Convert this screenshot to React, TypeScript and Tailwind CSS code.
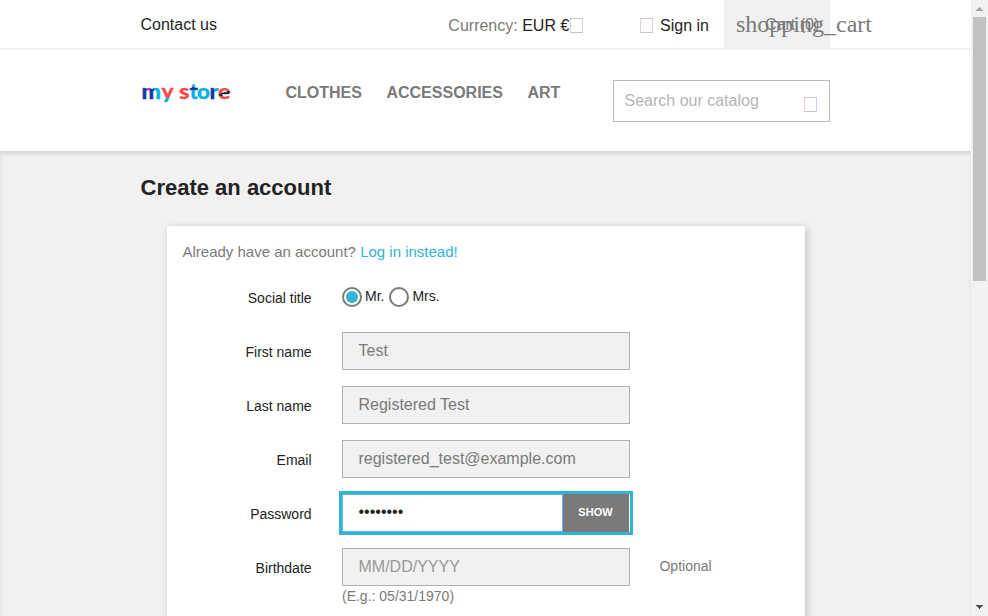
import type { ReactNode } from 'react';

function MissingGlyph({ className = '' }: { className?: string }) {
  return (
    <span
      className={`inline-block h-[15px] w-[13px] shrink-0 border border-t-[#c8c4c8] border-r-[#cfcfee] border-b-[#c8c4c8] border-l-[#eccfcd] ${className}`}
    />
  );
}

const letters = [
  { char: 'm', x: 0.5, width: 19.5, paint: 'url(#m)' },
  { char: 'y', x: 20.5, width: 12, paint: 'url(#y)' },
  { char: 's', x: 38, width: 10.5, paint: '#fb4a50' },
  { char: 't', x: 48.5, width: 8.5, paint: 'url(#t)' },
  { char: 'o', x: 56, width: 13, paint: '#05b2e0' },
  { char: 'r', x: 68.5, width: 9, paint: 'url(#r)' },
  { char: 'e', x: 77, width: 12.5, paint: 'url(#e)' },
];

function Logo() {
  return (
    <svg
      width="92"
      height="36"
      viewBox="0 0 92 36"
      className="block overflow-visible font-['Lato',sans-serif] text-[21.5px] [font-weight:900]"
      aria-label="my store"
    >
      <defs>
        <linearGradient id="m" gradientUnits="userSpaceOnUse" x1="1" x2="20" y1="0" y2="0">
          <stop offset=".27" stopColor="#0b3fa5" />
          <stop offset=".27" stopColor="#c433b4" />
          <stop offset=".42" stopColor="#c433b4" />
          <stop offset=".42" stopColor="#1436a5" />
          <stop offset=".62" stopColor="#1436a5" />
          <stop offset=".62" stopColor="#05b2e0" />
        </linearGradient>
        <linearGradient id="y" gradientUnits="userSpaceOnUse" x1="0" x2="0" y1="10" y2="30">
          <stop offset=".6" stopColor="#fb4a50" />
          <stop offset=".6" stopColor="#05b2e0" />
        </linearGradient>
        <linearGradient id="t" gradientUnits="userSpaceOnUse" x1="0" x2="0" y1="5" y2="23">
          <stop offset=".33" stopColor="#05b2e0" />
          <stop offset=".33" stopColor="#1436a5" />
          <stop offset=".5" stopColor="#1436a5" />
          <stop offset=".5" stopColor="#05b2e0" />
        </linearGradient>
        <linearGradient id="r" gradientUnits="userSpaceOnUse" x1="68.5" x2="77.5" y1="0" y2="0">
          <stop offset=".55" stopColor="#1436a5" />
          <stop offset=".55" stopColor="#05b2e0" />
        </linearGradient>
        <linearGradient id="e" gradientUnits="userSpaceOnUse" x1="81.5" x2="85.5" y1="11" y2="23">
          <stop offset=".45" stopColor="#fb4a50" />
          <stop offset=".45" stopColor="#0d3038" />
          <stop offset=".65" stopColor="#0d3038" />
          <stop offset=".65" stopColor="#fb4a50" />
        </linearGradient>
      </defs>
      {letters.map(({ char, x, width, paint }) => (
        <text
          key={char}
          x={x}
          y="22.5"
          textLength={width}
          lengthAdjust="spacingAndGlyphs"
          fill={paint}
          stroke={paint}
          strokeWidth=".3"
          strokeLinejoin="round"
        >
          {char}
        </text>
      ))}
    </svg>
  );
}

function Row({ label, children, note }: { label: string; children: ReactNode; note?: string }) {
  return (
    <div className="mb-4 flex h-[38px]">
      <label className="w-[128.6px] shrink-0 pt-[10px] text-right text-[14px] leading-[21px] text-[#232323]">
        {label}
      </label>
      <div className="ml-[30.4px] w-[288px] shrink-0">{children}</div>
      {note && <span className="ml-[29.5px] pt-[8px] text-[14px] leading-[21px] text-[#7a7a7a]">{note}</span>}
    </div>
  );
}

function Field({ value, placeholder }: { value?: string; placeholder?: string }) {
  return (
    <input
      defaultValue={value}
      placeholder={placeholder}
      className="block h-[38px] w-full border border-[#acaaa6]/90 bg-[#f1f1f1] pr-4 pb-px pl-[15.5px] text-[16px] text-[#7a7a7a] outline-none placeholder:text-[#999]"
    />
  );
}

function Radio({ checked }: { checked?: boolean }) {
  return (
    <span className="flex size-5 items-center justify-center rounded-full border-2 border-[#7a7a7a] bg-white">
      {checked && <span className="size-3 rounded-full bg-[#2fb5d2]" />}
    </span>
  );
}

export default function App() {
  return (
    <div className="flex h-[616px] w-[988px] overflow-hidden bg-[#f1f1f1] font-['Liberation_Sans',Arial,sans-serif] text-[#232323]">
      <div className="flex w-[971px] flex-col overflow-hidden">
        <header className="relative z-10 h-[151px] shrink-0 bg-white shadow-[0_2px_5px_0_rgba(0,0,0,0.08)]">
          <div className="h-[50px] border-b-2 border-[#f1f1f1] pl-[140.5px]">
            <div className="flex h-12 w-[689.5px] items-center text-[16px]">
              <span className="pt-px">Contact us</span>
              <span className="ml-auto flex items-center pt-[3px]">
                <span className="text-[#7a7a7a]">Currency:&nbsp;</span>
                <span className="mr-[0.8px]">EUR €</span>
                <MissingGlyph />
              </span>
              <span className="ml-[57px] flex items-center gap-[7px] pt-[3px]">
                <MissingGlyph />
                <span>Sign in</span>
              </span>
              <span className="relative ml-[15px] block h-12 w-[106px] bg-[#f1f1f1] text-[#7a7a7a]">
                <span className="absolute top-[9px] left-3 font-['Liberation_Serif',serif] text-[24px] leading-[30px]">
                  shopping_cart
                </span>
                <span className="absolute top-[13px] left-[41px] leading-6 whitespace-nowrap">Cart (0)</span>
              </span>
            </div>
          </div>
          <div className="flex pl-[140.5px]">
            <div className="w-[145px] pt-[26px]">
              <Logo />
            </div>
            <nav className="flex w-[327.5px] gap-[24.5px] pt-[31px] text-[16px] leading-6 font-bold text-[#7a7a7a]">
              <a>CLOTHES</a>
              <a>ACCESSORIES</a>
              <a>ART</a>
            </nav>
            <div className="mt-[30px] flex h-[42px] w-[217px] justify-between border border-[#bcbcbc] pr-3 pl-[10.5px]">
              <span className="pt-[8px] text-[16px] leading-6 text-[#b5b5b5]">Search our catalog</span>
              <MissingGlyph className="mt-4" />
            </div>
          </div>
        </header>
        <main className="flex-1 shadow-[inset_0_2px_5px_0_rgba(0,0,0,0.08)]">
          <h1 className="pt-[24px] pl-[140.5px] text-[22px] leading-[26px] font-bold">Create an account</h1>
          <section className="mt-[25px] ml-[167px] h-[420px] w-[638px] bg-white pr-4 pl-4 pt-[14px] shadow-[2px_2px_8px_0_rgba(0,0,0,0.2)]">
            <p className="-ml-[0.5px] text-[15px] leading-6 text-[#7a7a7a]">
              Already have an account? <a className="text-[#2fb5d2]">Log in instead!</a>
            </p>
            <div className="mt-[14px]">
              <Row label="Social title">
                <div className="flex items-center pt-[8px] text-[14px] leading-5">
                  <Radio checked />
                  <span className="mr-[5px] ml-[3px] pb-0.5">Mr.</span>
                  <Radio />
                  <span className="ml-[3px] pb-0.5">Mrs.</span>
                </div>
              </Row>
              <Row label="First name">
                <Field value="Test" />
              </Row>
              <Row label="Last name">
                <Field value="Registered Test" />
              </Row>
              <Row label="Email">
                <Field value="registered_test@example.com" />
              </Row>
              <Row label="Password">
                <div className="flex h-[38px] outline-[3px] outline-[#2fb5d2] outline-solid">
                  <input
                    type="password"
                    defaultValue="password"
                    className="h-[38px] w-[221px] border border-[#66afe9] bg-white pr-4 pb-[3px] pl-[15.5px] text-[16px] text-[#232323] outline-none"
                  />
                  <button className="mr-px h-[38px] flex-1 bg-[#7a7a7a] pr-px pb-px text-[11px] font-bold text-white">SHOW</button>
                </div>
              </Row>
              <Row label="Birthdate" note="Optional">
                <Field placeholder="MM/DD/YYYY" />
                <span className="block text-[14px] leading-[21px] text-[#7a7a7a]">(E.g.: 05/31/1970)</span>
              </Row>
            </div>
          </section>
        </main>
      </div>
      <aside className="flex w-[17px] flex-col items-center bg-[#f1f1f1]">
        <svg width="17" height="17" viewBox="0 0 17 17" shapeRendering="crispEdges">
          <path d="M5 11h7L8.5 7z" fill="#a3a3a3" />
        </svg>
        <div className="h-[264px] w-[13px] bg-[#c1c1c1]" />
        <svg className="mt-auto" width="17" height="17" viewBox="0 0 17 17" shapeRendering="crispEdges">
          <path d="M5 6h7L8.5 10z" fill="#505050" />
        </svg>
      </aside>
    </div>
  );
}
